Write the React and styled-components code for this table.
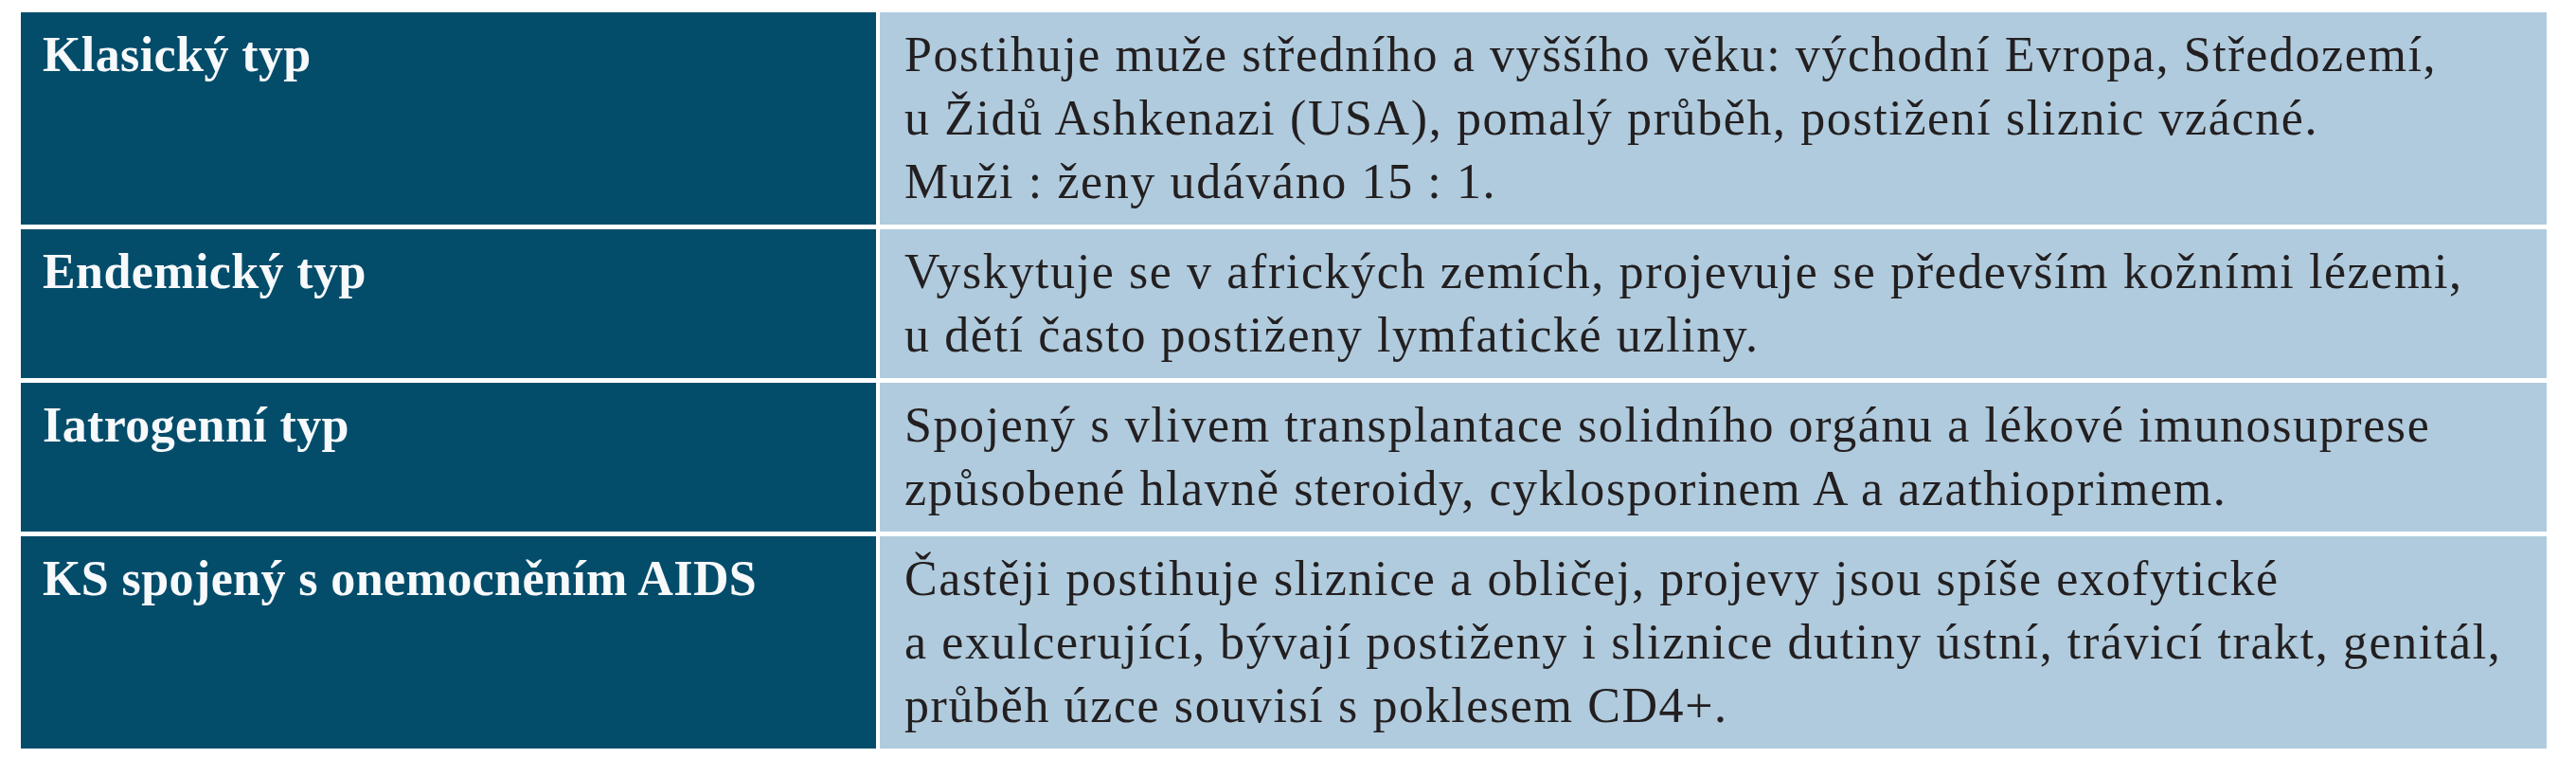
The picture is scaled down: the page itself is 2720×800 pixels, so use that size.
import React from 'react';
import styled, { createGlobalStyle } from 'styled-components';

const GlobalStyle = createGlobalStyle`
  html, body {
    margin: 0;
    padding: 0;
    background: #ffffff;
  }
`;

const rows = [
  {
    type: 'Klasický typ',
    lines: [
      'Postihuje muže středního a vyššího věku: východní Evropa, Středozemí,',
      'u Židů Ashkenazi (USA), pomalý průběh, postižení sliznic vzácné.',
      'Muži : ženy udáváno 15 : 1.',
    ],
  },
  {
    type: 'Endemický typ',
    lines: [
      'Vyskytuje se v afrických zemích, projevuje se především kožními lézemi,',
      'u dětí často postiženy lymfatické uzliny.',
    ],
  },
  {
    type: 'Iatrogenní typ',
    lines: [
      'Spojený s vlivem transplantace solidního orgánu a lékové imunosuprese',
      'způsobené hlavně steroidy, cyklosporinem A a azathioprimem.',
    ],
  },
  {
    type: 'KS spojený s onemocněním AIDS',
    lines: [
      'Častěji postihuje sliznice a obličej, projevy jsou spíše exofytické',
      'a exulcerující, bývají postiženy i sliznice dutiny ústní, trávicí trakt, genitál,',
      'průběh úzce souvisí s poklesem CD4+.',
    ],
  },
];

const App = () => {
  return (
    <Page>
      <GlobalStyle />
      <Table>
        {rows.map((row) => (
          <React.Fragment key={row.type}>
            <TypeCell>{row.type}</TypeCell>
            <TextCell>
              {row.lines.map((line) => (
                <Line key={line}>{line}</Line>
              ))}
            </TextCell>
          </React.Fragment>
        ))}
      </Table>
    </Page>
  );
};

const Page = styled.main`
  padding: 13px 0 0 22px;
  width: 2720px;
  box-sizing: border-box;
`;

const Table = styled.section`
  display: grid;
  grid-template-columns: 903px 1760px;
  column-gap: 4px;
  row-gap: 5px;
  font-family: 'Liberation Serif', 'DejaVu Serif', serif;
  font-size: 52px;
  line-height: 67px;
`;

const TypeCell = styled.div`
  background: #034d6b;
  color: #f7f9fb;
  font-weight: 700;
  letter-spacing: 0.4px;
  padding: 11px 23px 12px;
  white-space: nowrap;
`;

const TextCell = styled.div`
  background: #b0cbdd;
  color: #231f20;
  letter-spacing: 1.6px;
  padding: 11px 26px 12px;
`;

const Line = styled.span`
  display: block;
  white-space: nowrap;
`;

export default App;
